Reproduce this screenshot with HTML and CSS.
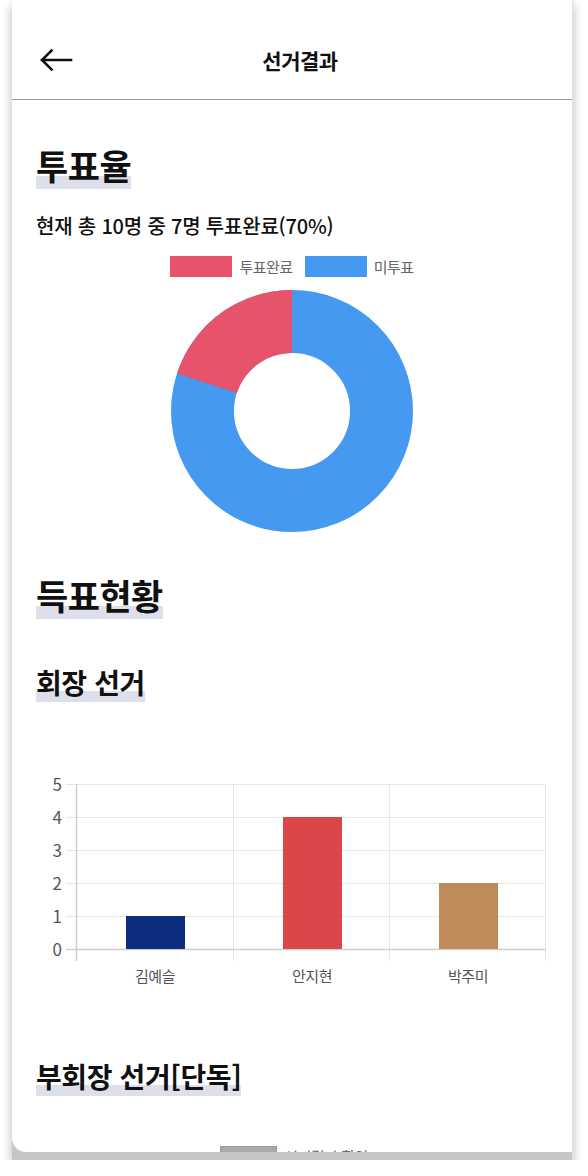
FILE: index.html
```html
<!DOCTYPE html>
<html lang="ko">
<head>
<meta charset="utf-8">
<title>선거결과</title>
<link rel="stylesheet" href="styles.css">
</head>
<body>
<div class="device">
  <div class="screen">
    <header class="topbar">
      <svg class="back" width="34" height="24" viewBox="0 0 34 24" aria-hidden="true">
        <path d="M32 12 H3 M12.5 2.5 L3 12 L12.5 21.5" fill="none" stroke="#111" stroke-width="2.6" stroke-linecap="square" stroke-linejoin="miter"/>
      </svg>
      <h1 class="title">선거결과</h1>
      <span></span>
    </header>

    <main class="content">
      <h2 class="h-xl first"><span>투표율</span></h2>
      <p class="summary">현재 총 10명 중 7명 투표완료(70%)</p>

      <div class="legend">
        <span class="lg-item"><i class="box red"></i>투표완료</span>
        <span class="lg-item"><i class="box blue"></i>미투표</span>
      </div>

      <div class="donut-wrap">
        <svg width="244" height="244" viewBox="0 0 244 244" aria-hidden="true">
          <circle cx="122" cy="122" r="89.5" fill="none" stroke="#4599f1" stroke-width="63"/>
          <path d="M122 1 A121 121 0 0 0 6.92 84.61 L66.84 104.08 A58 58 0 0 1 122 64 Z" fill="#e8536c"/>
        </svg>
      </div>

      <h2 class="h-xl second"><span>득표현황</span></h2>
      <h3 class="h-lg"><span>회장 선거</span></h3>

      <svg class="bar-chart" width="560" height="220" viewBox="0 0 560 220" aria-hidden="true">
        <g stroke="#e6e6e6" stroke-width="1">
          <line x1="54" y1="15.5" x2="533" y2="15.5"/>
          <line x1="54" y1="48.5" x2="533" y2="48.5"/>
          <line x1="54" y1="81.5" x2="533" y2="81.5"/>
          <line x1="54" y1="114.5" x2="533" y2="114.5"/>
          <line x1="54" y1="147.5" x2="533" y2="147.5"/>
          <line x1="221.5" y1="15" x2="221.5" y2="192"/>
          <line x1="377.5" y1="15" x2="377.5" y2="192"/>
          <line x1="533.5" y1="15" x2="533.5" y2="192"/>
        </g>
        <g stroke="#cfcfcf" stroke-width="1.5">
          <line x1="64.5" y1="15" x2="64.5" y2="192"/>
          <line x1="54" y1="180.5" x2="533" y2="180.5"/>
        </g>
        <rect x="114" y="147" width="59" height="33" fill="#0b2d7d"/>
        <rect x="271" y="48" width="59" height="132" fill="#dc4649"/>
        <rect x="427" y="114" width="59" height="66" fill="#c08b5b"/>
        <g class="ytick" text-anchor="end">
          <text x="50" y="22">5</text>
          <text x="50" y="55">4</text>
          <text x="50" y="88">3</text>
          <text x="50" y="121">2</text>
          <text x="50" y="154">1</text>
          <text x="50" y="187">0</text>
        </g>
        <g class="xtick" text-anchor="middle">
          <text x="143" y="213">김예슬</text>
          <text x="300" y="213">안지현</text>
          <text x="456" y="213">박주미</text>
        </g>
      </svg>

      <h3 class="h-lg third"><span>부회장 선거[단독]</span></h3>

      <div class="legend bottom">
        <span class="lg-item"><i class="box gray"></i>선거결과 확인</span>
      </div>
    </main>
  </div>
</div>
</body>
</html>
```

FILE: styles.css
```css
html, body {
  margin: 0;
  padding: 0;
  background: #ffffff;
}

body {
  font-family: "Noto Sans CJK KR", "Noto Sans", sans-serif;
  color: #111;
}

.device {
  width: 560px;
  margin-left: 12px;
  background: #c6c6c6;
  padding-bottom: 8px;
  box-shadow: 0 0 10px rgba(0, 0, 0, 0.12), 0 8px 10px rgba(0, 0, 0, 0.18);
  border-right: 1px solid #e2e2e2;
}

.screen {
  height: 1152px;
  overflow: hidden;
  background: #ffffff;
  border-bottom-left-radius: 14px;
}

.topbar {
  height: 100px;
  box-sizing: border-box;
  padding: 20px 0 0 16px;
  border-bottom: 1px solid #9c9c9c;
  display: grid;
  grid-template-columns: 1fr auto 1fr;
  align-items: center;
}

.back {
  margin-left: 11px;
  display: block;
}

.title {
  margin: 0;
  font-size: 21px;
  font-weight: 700;
  line-height: 28px;
  letter-spacing: -0.5px;
}

.content {
  padding: 0 24px;
}

.h-xl,
.h-lg {
  display: flex;
  margin: 0;
}

.h-xl span {
  font-size: 35px;
  line-height: 34px;
  letter-spacing: -0.5px;
  font-weight: 700;
  padding-bottom: 7px;
  background: linear-gradient(to bottom, transparent calc(100% - 13px), #dde0ea calc(100% - 13px));
}

.h-lg span {
  font-size: 28px;
  line-height: 28px;
  letter-spacing: -0.4px;
  font-weight: 700;
  padding-bottom: 6px;
  background: linear-gradient(to bottom, transparent calc(100% - 11px), #dde0ea calc(100% - 11px));
}

.h-xl.first { margin-top: 48px; }
.h-xl.second { margin-top: 45px; }
.h-lg { margin-top: 49px; }
.h-lg.third { margin-top: 73px; }

.summary {
  margin: 23px 0 0;
  font-size: 20px;
  line-height: 28px;
  font-weight: 500;
  letter-spacing: -0.2px;
}

.legend {
  margin-top: 16px;
  display: flex;
  justify-content: center;
  gap: 12px;
  height: 21px;
  align-items: center;
  font-size: 15px;
  color: #666;
  letter-spacing: -0.5px;
}

.lg-item {
  display: flex;
  align-items: center;
  gap: 7px;
  line-height: 21px;
}

.box {
  display: block;
  width: 62px;
  height: 21px;
  box-sizing: border-box;
}

.box.red { background: #e8536c; }
.box.blue { background: #4599f1; }
.box.gray {
  width: 57px;
  background: #aaaaaa;
  border: 1px solid #9a9a9a;
}

.legend.bottom {
  margin-top: 50px;
  padding-left: 4px;
  gap: 12px;
}

.donut-wrap {
  margin-top: 12px;
  display: flex;
  justify-content: center;
}

.donut-wrap svg { display: block; }

.bar-chart {
  display: block;
  margin: 67px 0 0 -24px;
}

.ytick text {
  font-family: "Noto Sans CJK KR", "Noto Sans", sans-serif;
  font-size: 17px;
  fill: #555;
}

.xtick text {
  font-family: "Noto Sans CJK KR", "Noto Sans", sans-serif;
  font-size: 15px;
  fill: #555;
  letter-spacing: -0.5px;
}
```
